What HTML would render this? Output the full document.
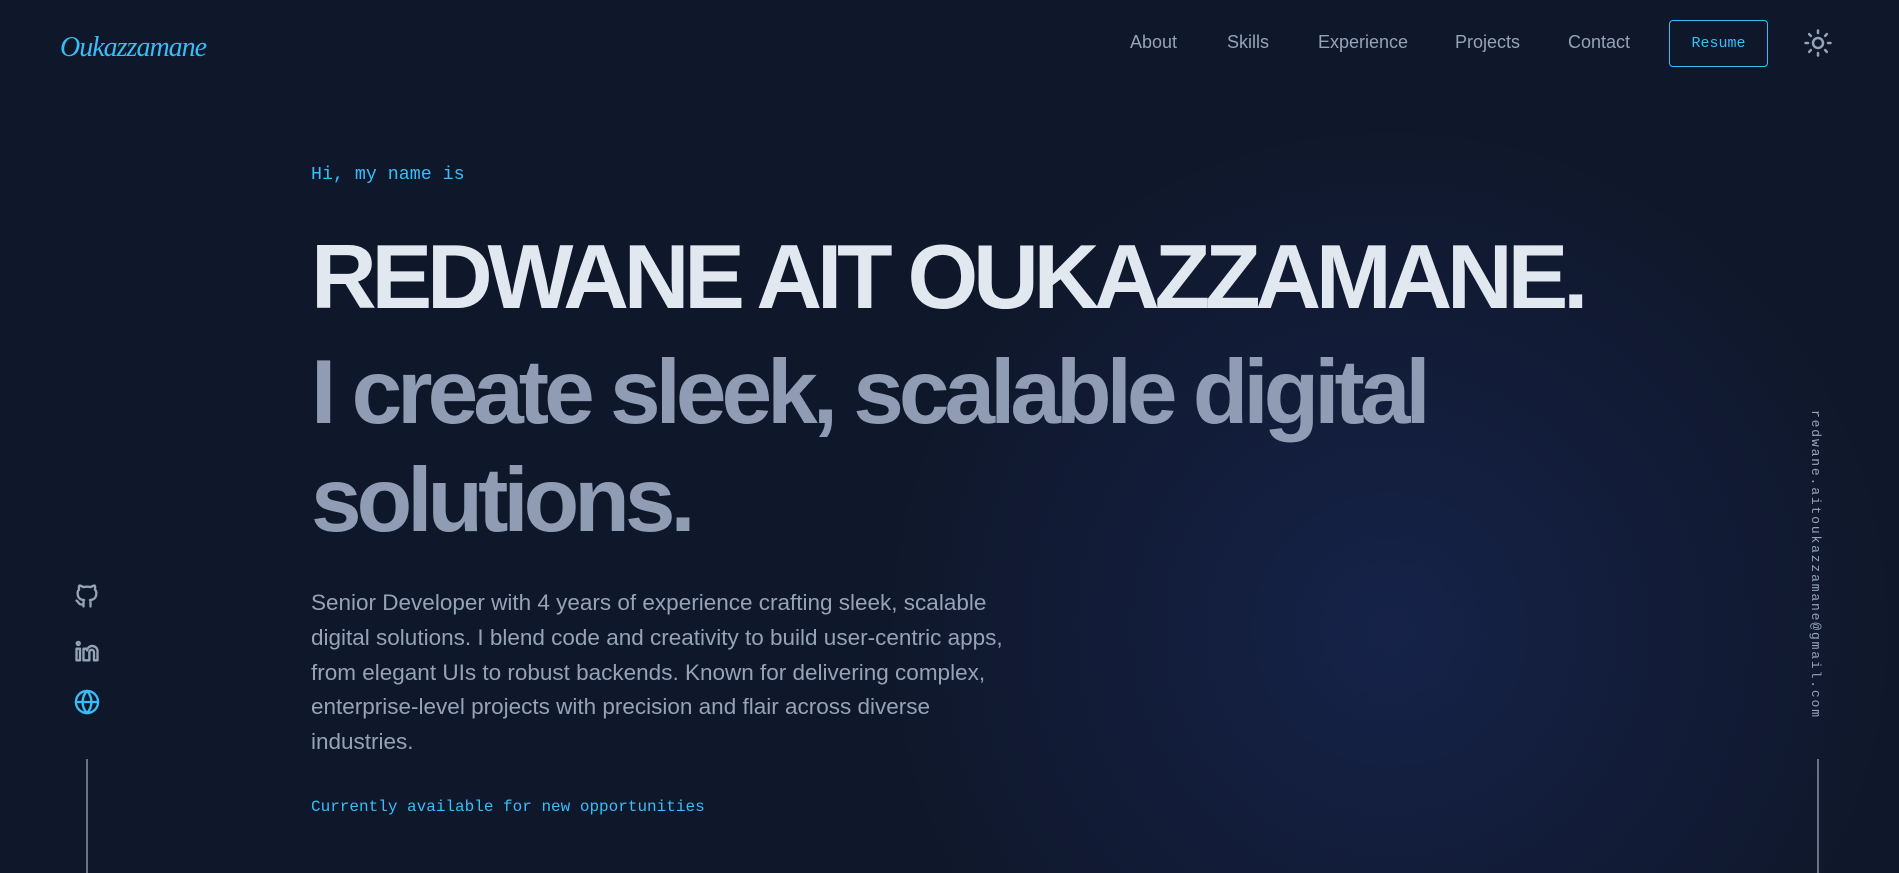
<!DOCTYPE html>
<html><head><meta charset="utf-8"><style>
*{margin:0;padding:0;box-sizing:border-box}
html,body{width:1899px;height:873px;overflow:hidden}
body{background:#0f172a;font-family:"Liberation Sans",Arial,sans-serif;position:relative}
.glow{position:absolute;left:0;top:0;width:1899px;height:873px;background:radial-gradient(circle 520px at 1390px 630px,rgba(30,48,110,0.45),rgba(15,23,42,0) 100%)}
.logo{position:absolute;left:60px;top:32px;font-family:"Liberation Serif",serif;font-style:italic;font-size:28px;color:#38bdf8;letter-spacing:-1px}
.nav a{position:absolute;top:32px;font-size:18px;color:#94a3b8;text-decoration:none}
.resume{position:absolute;left:1669px;top:20px;width:99px;height:47px;border:1px solid #38bdf8;border-radius:4px;color:#38bdf8;font-family:"Liberation Mono",monospace;font-size:15px;display:flex;align-items:center;justify-content:center}
.mono{font-family:"Liberation Mono",monospace;color:#38bdf8}
.hi{position:absolute;left:311px;top:165px;font-size:18.3px}
h1{position:absolute;left:311px;top:228px;font-size:91px;font-weight:700;color:#e2e8f0;letter-spacing:-5.2px;line-height:100px;white-space:nowrap}
h2{position:absolute;left:311px;top:339px;font-size:91px;font-weight:700;color:#8f9cb3;letter-spacing:-5px;line-height:108px;width:1200px}
p.d{position:absolute;left:311px;top:586px;width:700px;font-size:22.5px;line-height:34.8px;color:#94a3b8}
.avail{position:absolute;left:311px;top:798px;font-size:16px}
.vl{position:absolute;width:2px;background:#64748b;top:759px;height:114px}
.email{position:absolute;left:1808px;top:410px;writing-mode:vertical-rl;font-family:"Liberation Mono",monospace;font-size:13px;letter-spacing:1.85px;color:#94a3b8}
svg.i{position:absolute;fill:none;stroke-width:2;stroke-linecap:round;stroke-linejoin:round}
</style></head><body>
<div class="glow"></div>
<div class="logo">Oukazzamane</div>
<div class="nav">
<a style="left:1130px">About</a><a style="left:1227px">Skills</a><a style="left:1318px">Experience</a><a style="left:1455px">Projects</a><a style="left:1568px">Contact</a>
</div>
<div class="resume">Resume</div>
<svg class="i" style="left:1803px;top:28px;stroke:#94a3b8" width="30" height="30" viewBox="0 0 24 24"><circle cx="12" cy="12" r="4"/><path d="M12 2v2M12 20v2M4.9 4.9l1.4 1.4M17.7 17.7l1.4 1.4M2 12h2M20 12h2M6.3 17.7l-1.4 1.4M19.1 4.9l-1.4 1.4"/></svg>
<div class="mono hi">Hi, my name is</div>
<h1>REDWANE AIT OUKAZZAMANE.</h1>
<h2>I create sleek, scalable digital solutions.</h2>
<p class="d">Senior Developer with 4 years of experience crafting sleek, scalable digital solutions. I blend code and creativity to build user-centric apps, from elegant UIs to robust backends. Known for delivering complex, enterprise-level projects with precision and flair across diverse industries.</p>
<div class="mono avail">Currently available for new opportunities</div>
<svg class="i" style="left:73px;top:582px;stroke:#94a3b8" width="28" height="28" viewBox="0 0 24 24"><path d="M9 19c-4.3 1.4-4.3-2.5-6-3m12 5v-3.5c0-1 .1-1.4-.5-2 2.8-.3 5.5-1.4 5.5-6a4.6 4.6 0 0 0-1.3-3.2 4.2 4.2 0 0 0-.1-3.2s-1.1-.3-3.5 1.3a12.3 12.3 0 0 0-6.2 0C6.5 2.8 5.4 3.1 5.4 3.1a4.2 4.2 0 0 0-.1 3.2A4.6 4.6 0 0 0 4 9.5c0 4.6 2.7 5.7 5.5 6-.6.6-.6 1.2-.5 2V21"/></svg>
<svg class="i" style="left:73px;top:637px;stroke:#94a3b8" width="28" height="28" viewBox="0 0 24 24"><path d="M3 10v10h3V10zM9 20V10h3v1.5a4 4 0 0 1 9 1.5v7h-3v-7a2 2 0 0 0-4 0v7z"/><circle cx="4.5" cy="5.5" r="1.3"/></svg>
<svg class="i" style="left:73px;top:688px;stroke:#38bdf8" width="28" height="28" viewBox="0 0 24 24"><circle cx="12" cy="12" r="9.5"/><path d="M2.5 12h19M12 2.5c2.6 2.8 3.8 6 3.8 9.5s-1.2 6.7-3.8 9.5c-2.6-2.8-3.8-6-3.8-9.5s1.2-6.7 3.8-9.5z"/></svg>
<div class="vl" style="left:86px"></div>
<div class="email">redwane.aitoukazzamane@gmail.com</div>
<div class="vl" style="left:1817px"></div>
</body></html>
